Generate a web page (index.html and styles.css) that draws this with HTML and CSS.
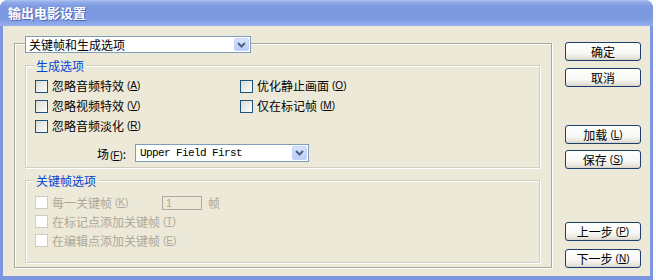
FILE: index.html
```html
<!DOCTYPE html>
<html lang="zh-CN">
<head>
<meta charset="utf-8">
<title>输出电影设置</title>
<link rel="stylesheet" href="styles.css">
</head>
<body>
<div class="window">
  <div class="titlebar"><span class="title">输出电影设置</span></div>
  <div class="client">
    <div class="outer">
      <div class="combo combo-top">
        <span class="combo-text">关键帧和生成选项</span>
        <span class="combo-btn"><svg width="9" height="6" viewBox="0 0 9 6"><path d="M1 1 L4.5 4.5 L8 1" fill="none" stroke="#4D6185" stroke-width="2"/></svg></span>
      </div>

      <div class="group group-gen">
        <div class="legend">生成选项</div>
        <div class="checks">
          <label class="check"><span class="box"></span><span class="txt">忽略音频特效</span><span class="mn">(<u>A</u>)</span></label>
          <label class="check"><span class="box"></span><span class="txt">优化静止画面</span><span class="mn">(<u>O</u>)</span></label>
          <label class="check"><span class="box"></span><span class="txt">忽略视频特效</span><span class="mn">(<u>V</u>)</span></label>
          <label class="check"><span class="box"></span><span class="txt">仅在标记帧</span><span class="mn">(<u>M</u>)</span></label>
          <label class="check"><span class="box"></span><span class="txt">忽略音频淡化</span><span class="mn">(<u>R</u>)</span></label>
        </div>
        <div class="field-row">
          <span class="field-label">场<span class="mn mn-tight">(<u>F</u>)</span>:</span>
          <div class="combo combo-field">
            <span class="combo-text mono">Upper Field First</span>
            <span class="combo-btn"><svg width="9" height="6" viewBox="0 0 9 6"><path d="M1 1 L4.5 4.5 L8 1" fill="none" stroke="#4D6185" stroke-width="2"/></svg></span>
          </div>
        </div>
      </div>

      <div class="group group-key">
        <div class="legend">关键帧选项</div>
        <div class="key-rows">
          <div class="key-row">
            <label class="check disabled check-fixed"><span class="box"></span><span class="txt">每一关键帧</span><span class="mn">(<u>K</u>)</span></label>
            <span class="num-input">1</span>
            <span class="unit">帧</span>
          </div>
          <div class="key-row">
            <label class="check disabled"><span class="box"></span><span class="txt">在标记点添加关键帧</span><span class="mn">(<u>T</u>)</span></label>
          </div>
          <div class="key-row">
            <label class="check disabled"><span class="box"></span><span class="txt">在编辑点添加关键帧</span><span class="mn">(<u>E</u>)</span></label>
          </div>
        </div>
      </div>
    </div>

    <div class="buttons">
      <button class="btn">确定</button>
      <button class="btn btn-gap-sm">取消</button>
      <button class="btn btn-gap-md">加载<span class="mn">(<u>L</u>)</span></button>
      <button class="btn btn-gap-xs">保存<span class="mn">(<u>S</u>)</span></button>
      <button class="btn btn-gap-lg">上一步<span class="mn">(<u>P</u>)</span></button>
      <button class="btn btn-gap-sm2">下一步<span class="mn">(<u>N</u>)</span></button>
    </div>
  </div>
</div>
</body>
</html>
```
FILE: styles.css
```css
* { box-sizing: border-box; }
html, body { margin: 0; padding: 0; background: #ffffff; }
body {
  font-family: "Noto Sans CJK SC", "Liberation Sans", sans-serif;
  font-size: 12px;
  color: #000;
}

.window {
  width: 653px;
  height: 280px;
  background: #7C97DF;
  border-radius: 8px 8px 0 0;
  display: flex;
  flex-direction: column;
}

.titlebar {
  height: 26px;
  flex: none;
  border-radius: 8px 8px 0 0;
  background: linear-gradient(to bottom, #AFC4F2 0px, #93ADEA 2px, #7F9BE1 6px, #7A97DF 14px, #809DE3 20px, #8EAAEA 24px, #98B2EE 26px);
  padding-left: 8px;
  display: flex;
  align-items: center;
}
.title {
  color: #fff;
  font-weight: bold;
  font-size: 13px;
  line-height: 16px;
  text-shadow: 1px 1px 0 #4C66B6;
}

.client {
  flex: 1;
  margin: 0 3px 4px 3px;
  background: #ECE9D8;
  display: flex;
  align-items: flex-start;
  padding: 17px 0 0 11px;
}

/* outer group box */
.outer {
  width: 538px;
  border: 1px solid #ACA899;
  box-shadow: 1px 1px 0 #fff, inset 1px 1px 0 #fff;
  padding: 0 11px 4px 10px;
}

.combo {
  display: flex;
  align-items: center;
  background: #fff;
  border: 1px solid #7F9DB9;
}
.combo-top {
  width: 226px;
  height: 17px;
  margin-top: -8px;
}
.combo-text {
  flex: 1;
  padding-left: 3px;
  line-height: 15px;
  white-space: nowrap;
}
.combo-btn {
  width: 15px;
  align-self: stretch;
  margin: 1px;
  border-radius: 2px;
  background: linear-gradient(to bottom, #D8E4FB, #BCCEF6);
  border: 1px solid #C3D3FD;
  display: flex;
  align-items: center;
  justify-content: center;
}

.mono {
  font-family: "Liberation Mono", monospace;
  font-size: 11px;
  letter-spacing: -0.6px;
  padding-left: 4px;
}

/* inner groups */
.group {
  border: 1px solid #D0CEBF;
  box-shadow: 1px 1px 0 #fff, inset 1px 1px 0 #fff;
  padding: 0 0 0 9px;
}
.group-gen { margin-top: 12px; padding-bottom: 5px; }
.group-key { margin-top: 12px; padding-bottom: 12px; }

.legend {
  margin-top: -7px;
  margin-left: -1px;
  height: 14px;
  line-height: 14px;
  color: #0046D5;
  background: #ECE9D8;
  padding: 0 2px;
  width: max-content;
}

.checks {
  margin-top: 3px;
  display: grid;
  grid-template-columns: 205px auto;
  grid-auto-rows: 20px;
}

.check {
  display: flex;
  align-items: center;
  white-space: nowrap;
  line-height: 14px;
}
.box {
  width: 13px;
  height: 13px;
  border: 1px solid #1C5180;
  background: linear-gradient(135deg, #DCDCD6 0%, #F3F3EF 70%, #FFFFFF 100%);
  margin-right: 4px;
  flex: none;
}
.mn {
  font-family: "Liberation Sans", sans-serif;
  font-size: 10px;
  margin-left: 3px;
}
.mn-tight { margin-left: 1px; }

.field-row {
  margin-top: 8px;
  padding-left: 62px;
  display: flex;
  align-items: center;
  height: 18px;
}
.field-label {
  white-space: nowrap;
  width: 38px;
}
.combo-field {
  width: 174px;
  height: 18px;
}

.key-rows {
  margin-top: 5px;
  display: flex;
  flex-direction: column;
}
.key-row {
  height: 19px;
  display: flex;
  align-items: center;
}
.check.disabled { color: #ACA899; }
.check.disabled .box {
  border-color: #CFCDC0;
  background: #FFFFFF;
}
.check-fixed { width: 127px; }
.num-input {
  width: 40px;
  height: 14px;
  border: 1px solid #AFAC9E;
  color: #ACA899;
  font-family: "Liberation Sans", sans-serif;
  font-size: 11px;
  line-height: 12px;
  padding-left: 3px;
}
.unit {
  margin-left: 6px;
  color: #ACA899;
}

/* buttons */
.buttons {
  margin-left: 13px;
  margin-top: -1px;
  display: flex;
  flex-direction: column;
}
.btn {
  width: 76px;
  height: 19px;
  padding: 0;
  border: 1px solid #1E3F6E;
  border-radius: 3px;
  background: linear-gradient(to bottom, #FFFFFF 0%, #F7F7F4 60%, #E6E3DA 90%, #D6D0C5 100%);
  font-family: "Noto Sans CJK SC", "Liberation Sans", sans-serif;
  font-size: 12px;
  line-height: 15px;
  color: #000;
  display: flex;
  align-items: center;
  justify-content: center;
}
.btn-gap-sm { margin-top: 7px; }
.btn-gap-md { margin-top: 38px; }
.btn-gap-xs { margin-top: 6px; }
.btn-gap-lg { margin-top: 53px; }
.btn-gap-sm2 { margin-top: 8px; }
```
